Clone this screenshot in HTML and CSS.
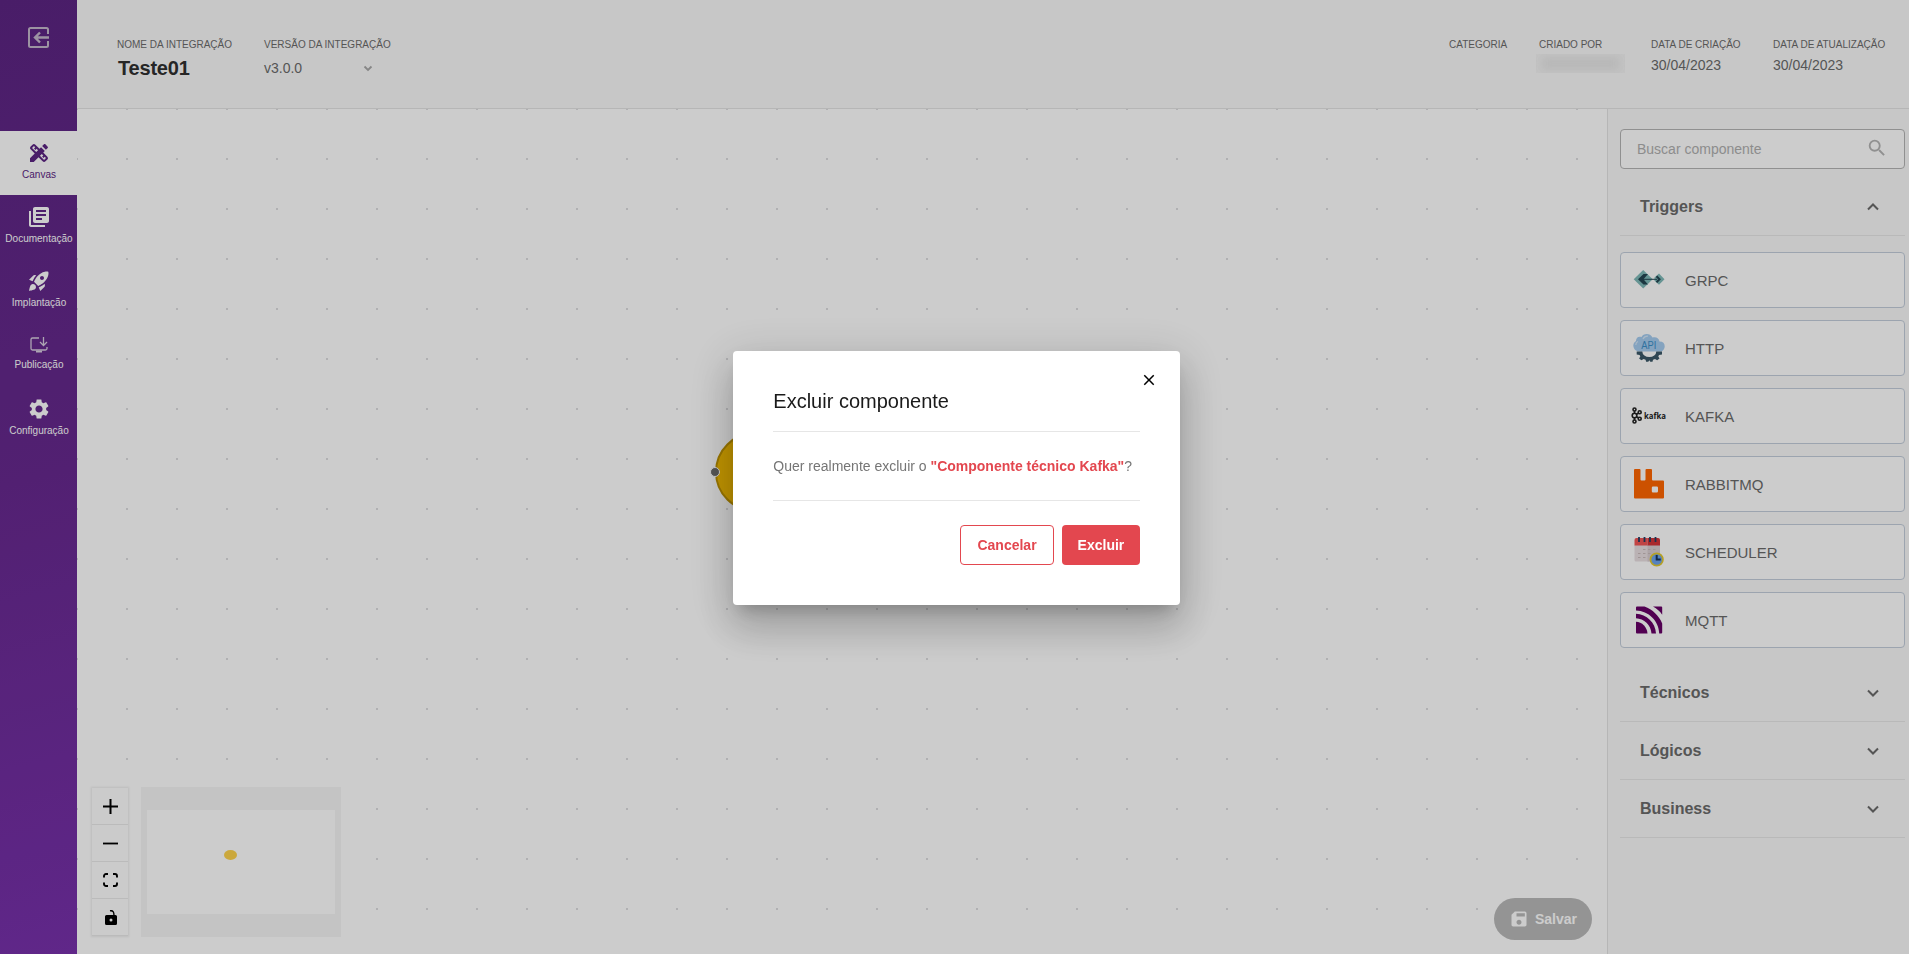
FILE: index.html
```html
<!DOCTYPE html>
<html lang="pt-BR">
<head>
  <meta charset="UTF-8">
  <meta name="viewport" content="width=device-width, initial-scale=1.0">
  <title>Teste01</title>
  <link rel="stylesheet" href="styles.css">
</head>
<body>
  <div class="app">
    <nav class="sidebar">
      <div class="exit">
        <svg width="22" height="22" viewBox="0 0 22 22" fill="none" stroke="currentColor" stroke-width="2">
          <path d="M20 7V2.500a1.500 1.500 0 0 0-1.500-1.500H2.500A1.500 1.500 0 0 0 1 2.500v16A1.500 1.500 0 0 0 2.500 20h16a1.500 1.500 0 0 0 1.500-1.500V14"/>
          <path d="M21 10.500H7.500M12 5.500l-5 5 5 5" stroke-width="2.400"/>
        </svg>
      </div>
      <a class="item active">
        <svg width="24" height="24" viewBox="0 0 24 24"><path d="M16.24 11.51l1.57-1.57-3.75-3.75-1.57 1.57-4.14-4.13c-.78-.78-2.05-.78-2.83 0l-1.9 1.9c-.78.78-.78 2.050 0 2.830l4.130 4.130L3 17.250V21h3.750l4.760-4.760 4.130 4.130c.95.95 2.230.6 2.830 0l1.900-1.900c.78-.78.78-2.050 0-2.830l-4.130-4.130zm-7.060-.44L5.040 6.940l1.890-1.900L8.200 6.310 7.020 7.500l1.410 1.410 1.190-1.190 1.450 1.450-1.890 1.900zm7.880 7.890l-4.130-4.130 1.900-1.900 1.450 1.450-1.190 1.190 1.410 1.410 1.190-1.190 1.270 1.270-1.900 1.900zM20.710 7.040c.39-.39.39-1.020 0-1.410l-2.340-2.340c-.47-.47-1.120-.29-1.410 0l-1.830 1.830 3.750 3.750 1.830-1.830z"/></svg>
        <span>Canvas</span>
      </a>
      <a class="item">
        <svg width="24" height="24" viewBox="0 0 24 24"><path d="M4 6H2v14c0 1.100.9 2 2 2h14v-2H4V6zm16-4H8c-1.100 0-2 .9-2 2v12c0 1.100.9 2 2 2h12c1.100 0 2-.9 2-2V4c0-1.100-.9-2-2-2zm-1 9H9V9h10v2zm-4 4H9v-2h6v2zm4-8H9V5h10v2z"/></svg>
        <span>Documentação</span>
      </a>
      <a class="item">
        <svg width="24" height="24" viewBox="0 0 24 24"><path d="M9.190 6.350c-2.040 2.290-3.440 5.580-3.570 5.890L2 10.690l4.050-4.050c.47-.47 1.150-.68 1.810-.55l1.330.26zM11.170 17s3.740-1.550 5.890-3.700c5.400-5.400 4.500-9.620 4.210-10.570-.95-.3-5.170-1.190-10.570 4.210C8.550 9.090 7 12.830 7 12.830L11.170 17zm6.480-2.190c-2.290 2.040-5.580 3.440-5.890 3.570L13.310 22l4.050-4.050c.47-.47.68-1.150.55-1.810l-.26-1.330zM9 18c0 .83-.34 1.580-.88 2.120C6.940 21.300 2 22 2 22s.7-4.940 1.880-6.120A3 3 0 0 1 9 18zm4-9c0-1.100.9-2 2-2s2 .9 2 2-.9 2-2 2-2-.9-2-2z"/></svg>
        <span>Implantação</span>
      </a>
      <a class="item">
        <svg class="publish" width="20" height="20" viewBox="0 0 20 20"><path d="M10 3H3.500A1.500 1.500 0 0 0 2 4.500v9A1.500 1.500 0 0 0 3.500 15h13a1.500 1.500 0 0 0 1.500-1.500V12M14.500 2v8M11 7l3.500 3.500L18 7"/><path d="M7 16.500h6" stroke-width="2"/></svg>
        <span>Publicação</span>
      </a>
      <a class="item">
        <svg width="24" height="24" viewBox="0 0 24 24"><path d="M19.140 12.940c.04-.3.060-.61.060-.94 0-.32-.02-.64-.07-.94l2.030-1.580c.18-.14.23-.41.12-.61l-1.920-3.320c-.12-.22-.37-.29-.59-.22l-2.390.96c-.5-.38-1.030-.7-1.620-.94l-.36-2.540c-.04-.24-.24-.41-.48-.41h-3.840c-.24 0-.43.17-.47.41l-.36 2.540c-.59.24-1.130.57-1.620.94l-2.390-.96c-.22-.08-.47 0-.59.22L2.740 8.870c-.12.21-.08.47.12.61l2.030 1.580c-.05.3-.09.63-.09.94s.02.64.07.94l-2.030 1.580c-.18.14-.23.41-.12.61l1.920 3.320c.12.22.37.29.59.22l2.390-.96c.5.38 1.030.7 1.620.94l.36 2.540c.05.24.24.41.48.41h3.840c.24 0 .44-.17.47-.41l.36-2.540c.59-.24 1.130-.56 1.620-.94l2.390.96c.22.08.47 0 .59-.22l1.920-3.320c.12-.22.07-.47-.12-.61l-2.010-1.580zM12 15.600c-1.980 0-3.600-1.620-3.600-3.600s1.620-3.600 3.600-3.600 3.600 1.620 3.600 3.600-1.620 3.600-3.600 3.600z"/></svg>
        <span>Configuração</span>
      </a>
    </nav>

    <div class="main">
      <header class="header">
        <div class="field name">
          <label>NOME DA INTEGRAÇÃO</label>
          <strong>Teste01</strong>
        </div>
        <div class="field version">
          <label>VERSÃO DA INTEGRAÇÃO</label>
          <div class="version-select">
            <span>v3.0.0</span>
            <svg width="10" height="7" viewBox="0 0 10 7"><path d="M1.500 1.500 5 5l3.500-3.500"/></svg>
          </div>
        </div>
        <div class="field category">
          <label>CATEGORIA</label>
        </div>
        <div class="field author">
          <label>CRIADO POR</label>
          <div class="author-hidden"><i></i></div>
        </div>
        <div class="field created">
          <label>DATA DE CRIAÇÃO</label>
          <span>30/04/2023</span>
        </div>
        <div class="field updated">
          <label>DATA DE ATUALIZAÇÃO</label>
          <span>30/04/2023</span>
        </div>
      </header>

      <div class="content">
        <div class="canvas">
          <svg class="dots" width="100%" height="100%">
            <pattern id="grid" x="-1" y="-1" width="50" height="50" patternUnits="userSpaceOnUse">
              <circle cx="1" cy="1" r="1" fill="#d0d0d4"/>
            </pattern>
            <rect width="100%" height="100%" fill="url(#grid)"/>
          </svg>

          <div class="node"><span class="handle"></span></div>

          <div class="controls">
            <button><svg width="15" height="15" viewBox="0 0 15 15"><path d="M0 7.500h15M7.500 0v15" stroke="#000" stroke-width="2"/></svg></button>
            <button><svg width="15" height="15" viewBox="0 0 15 15"><path d="M0 7.500h15" stroke="#000" stroke-width="1.800"/></svg></button>
            <button><svg width="15" height="14" viewBox="0 0 15 14"><path d="M1 4.500V3a2 2 0 0 1 2-2h2M10 1h2a2 2 0 0 1 2 2v1.500M14 9.500V11a2 2 0 0 1-2 2h-2M5 13H3a2 2 0 0 1-2-2V9.500" fill="none" stroke="#000" stroke-width="1.900"/></svg></button>
            <button><svg width="12" height="15" viewBox="0 0 12 15"><path d="M5 .8C8 .2 9 2 9 5.500" fill="none" stroke="#000" stroke-width="1.400"/><path fill-rule="evenodd" d="M1.500 5h9A1.500 1.500 0 0 1 12 6.500v7a1.500 1.500 0 0 1-1.500 1.500h-9A1.500 1.500 0 0 1 0 13.500v-7A1.500 1.500 0 0 1 1.500 5zM6 8.500a1.500 1.500 0 1 0 0 3 1.500 1.500 0 0 0 0-3z"/></svg></button>
          </div>

          <div class="minimap">
            <div class="minimap-view"><span></span></div>
          </div>

          <button class="save">
            <svg width="20" height="20" viewBox="0 0 24 24"><path d="M17 3H5a2 2 0 0 0-2 2v14c0 1.100.9 2 2 2h14c1.100 0 2-.9 2-2V7l-4-4zm-5 16c-1.660 0-3-1.340-3-3s1.340-3 3-3 3 1.340 3 3-1.340 3-3 3zm3-10H5V5h10v4z"/></svg>
            Salvar
          </button>
        </div>

        <aside class="panel">
          <div class="search">
            <span>Buscar componente</span>
            <svg width="22" height="22" viewBox="0 0 24 24"><path d="M15.500 14h-.79l-.28-.27A6.470 6.470 0 0 0 16 9.500 6.500 6.500 0 1 0 9.500 16c1.610 0 3.090-.59 4.230-1.570l.27.28v.79l5 4.990L20.490 19l-4.990-5zm-6 0C7.010 14 5 11.990 5 9.500S7.010 5 9.500 5 14 7.010 14 9.500 11.990 14 9.500 14z"/></svg>
          </div>

          <div class="group">
            <span>Triggers</span>
            <svg width="14" height="10" viewBox="0 0 14 10"><path d="M2 7.500 7 2.500l5 5"/></svg>
          </div>

          <div class="cards">
            <div class="card">
              <svg width="36" height="36" viewBox="0 0 36 36">
                <path d="M2.700 17.300 12.200 8l9.500 9.300-9.500 9.300z" fill="#7fb9b8"/>
                <path d="M23.500 15.500 28 11.500l5.500 5.800-5.500 5.500-4.500-4z" fill="#7fb9b8"/>
                <path d="M17 12h-4.500l-5.500 5.300 5.500 5.300H17l-4.500-5.300z" fill="#244552"/>
                <path d="M11 17.300h15" stroke="#244552" stroke-width="1"/>
                <path d="M25.500 14.300l3 3-3 3" fill="none" stroke="#244552" stroke-width="2"/>
              </svg>
              <span>GRPC</span>
            </div>
            <div class="card">
              <svg width="36" height="36" viewBox="0 0 36 36">
                <path d="M8 21.500a5.700 5.700 0 0 1-3-10.500C5 7 8 6 10.500 7 12 3.500 19 2.500 21.500 7.500c4-1 6.500 1 7 4 3.500 0 5.200 2 5.200 4.700 0 3-2 5.300-5 5.300z" fill="#a6ccef"/>
                <path d="M4.800 15c0-2 1-3 2.200-3.500M12 9c1-2 3-3 5-2.800" fill="none" stroke="#d5e7f8" stroke-width="1.200"/>
                <path d="M5.700 21.500h5.600a7 5.500 0 0 0 14 0H31v3l-3 .5-.7 1.500 1.200 2-2.300 1.800-2.200-1.300-2 .7-.5 2h-2.200l-1-1.500-1 1.500h-2.200l-.5-2-2-.7-2.200 1.300-2.300-1.800 1.200-2-.7-1.500-2.900-.5z" fill="#3b5868"/>
                <text x="10.300" y="19" class="api-text" textLength="15" lengthAdjust="spacingAndGlyphs">API</text>
              </svg>
              <span>HTTP</span>
            </div>
            <div class="card">
              <svg width="36" height="36" viewBox="0 0 36 36">
                <g fill="none" stroke="#222" stroke-width="1.600">
                  <circle cx="3.500" cy="17.500" r="2.300"/>
                  <circle cx="3.500" cy="11.500" r="1.500"/>
                  <circle cx="3.500" cy="23.500" r="1.500"/>
                  <circle cx="8.700" cy="14.300" r="1.500"/>
                  <circle cx="8.700" cy="20.700" r="1.500"/>
                  <path d="M3.500 13v2.200M3.500 19.800V22M5.500 16.300l1.800-1.100M5.500 18.700l1.800 1.100"/>
                </g>
                <text x="13" y="21" class="kafka-text" textLength="22" lengthAdjust="spacingAndGlyphs">kafka</text>
              </svg>
              <span>KAFKA</span>
            </div>
            <div class="card">
              <svg width="36" height="36" viewBox="0 0 36 36">
                <path fill-rule="evenodd" d="M4 3h4.500a1 1 0 0 1 1 1v9.500a1 1 0 0 0 1 1h3a1 1 0 0 0 1-1V4a1 1 0 0 1 1-1H20a1 1 0 0 1 1 1v9.500a1 1 0 0 0 1 1h10a1 1 0 0 1 1 1v16a1 1 0 0 1-1 1H4a1 1 0 0 1-1-1V4a1 1 0 0 1 1-1zM22 20.500a1.200 1.200 0 0 0-1.200 1.200v3.600a1.200 1.200 0 0 0 1.200 1.200h3.800a1.200 1.200 0 0 0 1.200-1.200v-3.600a1.200 1.200 0 0 0-1.200-1.200z" fill="#ff6600"/>
              </svg>
              <span>RABBITMQ</span>
            </div>
            <div class="card">
              <svg width="36" height="36" viewBox="0 0 36 36">
                <path d="M3.500 11h25.500v16.500H5a1.500 1.500 0 0 1-1.500-1.500z" fill="#e9dfe2"/>
                <path d="M16.500 11H29v16.500H16.500z" fill="#d9cdd1"/>
                <path d="M3.500 11.500V6a2 2 0 0 1 2-2h11v7.500z" fill="#f25555"/>
                <path d="M16.500 4H27a2 2 0 0 1 2 2v5.500H16.500z" fill="#d43338"/>
                <path d="M8 3v5M13.500 3v5M19 3v5M24.500 3v5" stroke="#243e64" stroke-width="1.800"/>
                <path d="M12 15.500h2.500M17 15.500h2.500M22 15.500h2.500M7 19.500h2.500M12 19.500h2.500M17 19.500h2.500M7 23.500h2.500M12 23.500h2.500" stroke="#c9bbbb" stroke-width="1.200"/>
                <circle cx="25.700" cy="25.500" r="6.200" fill="#6ba3ee" stroke="#e3c92f" stroke-width="1.800"/>
                <path d="M25.700 21v4.500h4" fill="none" stroke="#17345c" stroke-width="2"/>
              </svg>
              <span>SCHEDULER</span>
            </div>
            <div class="card">
              <svg width="36" height="36" viewBox="0 0 36 36">
                <g fill="#660066">
                  <path d="M5 19.800C11 20 16 25 16.500 31.500H6a1 1 0 0 1-1-1z"/>
                  <path d="M5 11.700v4.500C13 16.500 20 23 20.500 31.500H25C24.500 20.500 15.500 12 5 11.700z"/>
                  <path d="M5 5.500v3C17.500 8.800 28 19 28.200 31.500h2a1 1 0 0 0 1-1v-9C28 13.500 21.500 7.500 13.500 4.500H6a1 1 0 0 0-1 1z"/>
                  <path d="M22 4.500c4 2 7 5 9.200 8.200V5.500a1 1 0 0 0-1-1z"/>
                </g>
              </svg>
              <span>MQTT</span>
            </div>
          </div>

          <div class="group">
            <span>Técnicos</span>
            <svg width="14" height="10" viewBox="0 0 14 10"><path d="M2 2.500l5 5 5-5"/></svg>
          </div>
          <div class="group">
            <span>Lógicos</span>
            <svg width="14" height="10" viewBox="0 0 14 10"><path d="M2 2.500l5 5 5-5"/></svg>
          </div>
          <div class="group">
            <span>Business</span>
            <svg width="14" height="10" viewBox="0 0 14 10"><path d="M2 2.500l5 5 5-5"/></svg>
          </div>
        </aside>
      </div>
    </div>
  </div>

  <div class="backdrop">
    <div class="modal">
      <svg class="close" width="18" height="18" viewBox="0 0 24 24"><path d="M19 6.410 17.590 5 12 10.590 6.410 5 5 6.410 10.590 12 5 17.590 6.410 19 12 13.410 17.590 19 19 17.590 13.410 12z"/></svg>
      <h2>Excluir componente</h2>
      <p>Quer realmente excluir o <b>"Componente técnico Kafka"</b>?</p>
      <div class="actions">
        <button class="cancel">Cancelar</button>
        <button class="delete">Excluir</button>
      </div>
    </div>
  </div>
</body>
</html>
```
FILE: styles.css
```css
* {
    box-sizing: border-box;
}
body {
    margin: 0;
    font-family: "Liberation Sans", Arial, sans-serif;
    font-size: 14px;
    color: #6b6b6b;
    overflow: hidden;
}
button {
    font-family: inherit;
    cursor: pointer;
}
.app {
    display: flex;
    height: 100vh;
}

/* sidebar */
.sidebar {
    width: 77px;
    flex-shrink: 0;
    background: linear-gradient(165deg, #5c2583 0%, #67298f 50%, #7831ac 100%);
    color: #fff;
}
.exit {
    height: 131px;
    padding: 27px 0 0 28px;
    color: #c4b8cb;
}
.exit svg {
    display: block;
}
.item {
    height: 64px;
    display: flex;
    flex-direction: column;
    align-items: center;
    justify-content: center;
    font-size: 10px;
    line-height: 20px;
    padding-left: 1px;
}
.item svg {
    fill: currentColor;
}
.item .publish {
    fill: none;
    stroke: #d9cfe0;
    stroke-width: 1.3;
}
.item.active {
    background: #fff;
    color: #5c2583;
}

/* header */
.main {
    flex: 1;
    display: flex;
    flex-direction: column;
    min-width: 0;
}
.header {
    height: 109px;
    flex-shrink: 0;
    display: flex;
    padding: 37px 0 0 40px;
    background: #f9f9f9;
    border-bottom: 1px solid #e4e4e4;
}
.field {
    display: flex;
    flex-direction: column;
    flex-shrink: 0;
}
.field label {
    font-size: 10px;
    line-height: 16px;
    white-space: nowrap;
}
.field span {
    line-height: 16px;
    margin-top: 4px;
}
.field strong {
    font-size: 20px;
    line-height: 24px;
    margin: 3px 0 0 1px;
    letter-spacing: -0.2px;
    color: #303030;
}
.name {
    width: 147px;
}
.version-select {
    display: flex;
    align-items: center;
    justify-content: space-between;
    width: 109px;
    margin-top: 3px;
}
.version-select svg,
.group svg {
    fill: none;
    stroke: #a8a8a8;
    stroke-width: 1.8;
}
.version-select svg {
    margin-top: 5px;
}
.category {
    width: 90px;
    margin-left: auto;
}
.author {
    width: 112px;
}
.author-hidden {
    width: 89px;
    height: 19px;
    margin: 1px 0 0 -3px;
    background: #f4f4f4;
    overflow: hidden;
}
.author-hidden i {
    display: block;
    width: 77px;
    height: 13px;
    margin: 3px 6px;
    background: #e6e6e6;
    filter: blur(4px);
}
.created {
    width: 122px;
}
.updated {
    width: 136px;
}

/* canvas */
.content {
    flex: 1;
    display: flex;
    min-height: 0;
}
.canvas {
    flex: 1;
    position: relative;
    background: #fff;
}
.dots {
    display: block;
}
.node {
    position: absolute;
    left: 638px;
    top: 323px;
    width: 80px;
    height: 80px;
    border-radius: 50%;
    background: #f2ba00;
    border: 2px solid #bf9300;
}
.handle {
    position: absolute;
    left: -7px;
    top: 33px;
    width: 10px;
    height: 10px;
    border-radius: 50%;
    background: #6b6b6b;
    border: 1px solid #fff;
}
.controls {
    position: absolute;
    left: 15px;
    bottom: 18px;
    box-shadow: 0 0 2px 1px rgba(0, 0, 0, 0.08);
}
.controls button {
    display: flex;
    align-items: center;
    justify-content: center;
    width: 36px;
    height: 37px;
    padding: 0 0 0 1px;
    background: #fefefe;
    border: none;
    border-bottom: 1px solid #eaeaea;
}
.minimap {
    position: absolute;
    left: 64px;
    bottom: 17px;
    width: 200px;
    height: 150px;
    padding: 23px 6px;
    background: #f5f5f5;
}
.minimap-view {
    height: 104px;
    background: #fff;
    padding: 40px 0 0 76.500px;
}
.minimap-view span {
    display: block;
    width: 13px;
    height: 10px;
    border-radius: 50%;
    background: #fed34c;
}
.save {
    position: absolute;
    right: 15px;
    bottom: 14px;
    width: 98px;
    height: 42px;
    display: flex;
    align-items: center;
    gap: 6px;
    padding: 0 0 0 15px;
    border: none;
    border-radius: 21px;
    background: #bababa;
    color: #fff;
    font-size: 14px;
    font-weight: bold;
}
.save svg {
    fill: #fff;
    transform: scaleX(-1);
}

/* components panel */
.panel {
    width: 302px;
    flex-shrink: 0;
    padding: 20px 4px 0 12px;
    background: #f9f9f9;
    border-left: 1px solid #e4e4e4;
}
.search {
    height: 40px;
    margin-bottom: 9px;
    padding: 0 16px;
    display: flex;
    align-items: center;
    justify-content: space-between;
    background: #fff;
    border: 1px solid #b5b5b5;
    border-radius: 4px;
    color: #b0b0b0;
}
.search svg {
    fill: #b5b5b5;
    margin-top: -3px;
}
.group {
    height: 58px;
    display: flex;
    align-items: center;
    justify-content: space-between;
    padding: 0 25px 0 20px;
    border-bottom: 1px solid #e8e8e8;
    font-size: 16px;
    font-weight: bold;
}
.group svg {
    stroke: #6b6b6b;
    stroke-width: 2;
}
.cards {
    display: flex;
    flex-direction: column;
    gap: 12px;
    padding: 16px 0;
}
.card {
    height: 56px;
    display: flex;
    align-items: center;
    gap: 18px;
    padding-left: 10px;
    background: #fff;
    border: 1px solid #c3cedb;
    border-radius: 4px;
    font-size: 15px;
}
.card svg {
    overflow: visible;
}
.api-text {
    font: 10px "Liberation Sans", sans-serif;
    fill: #3a8fc8;
}
.kafka-text {
    font: bold 9.5px "Open Sans", sans-serif;
    fill: #222;
}

/* delete dialog */
.backdrop {
    position: fixed;
    inset: 0;
    display: flex;
    align-items: center;
    justify-content: center;
    padding: 2px 0 0 5px;
    background: rgba(0, 0, 0, 0.2);
}
.modal {
    position: relative;
    left: -0.2px;
    width: 447px;
    height: 254px;
    padding: 40px;
    background: #fff;
    border-radius: 4px;
    box-shadow: 0 11px 15px -7px rgba(0, 0, 0, 0.2), 0 24px 38px 3px rgba(0, 0, 0, 0.14), 0 9px 46px 8px rgba(0, 0, 0, 0.12);
}
.close {
    position: absolute;
    top: 20px;
    right: 22px;
}
.modal h2 {
    height: 41px;
    margin: 0;
    font-size: 20px;
    font-weight: normal;
    line-height: 20px;
    color: #1a1a1a;
    border-bottom: 1px solid #e6e6e6;
}
.modal p {
    height: 69px;
    margin: 0;
    line-height: 68px;
    color: #757575;
    white-space: nowrap;
    border-bottom: 1px solid #e6e6e6;
}
.modal b {
    color: #e3474f;
}
.actions {
    display: flex;
    justify-content: flex-end;
    gap: 8px;
    margin-top: 24px;
}
.actions button {
    height: 40px;
    padding: 0 16px;
    font-size: 14px;
    font-weight: bold;
    border-radius: 4px;
}
.cancel {
    background: #fff;
    color: #e3474f;
    border: 1px solid #e3474f;
}
.delete {
    background: #e3474f;
    color: #fff;
    border: none;
}
```
